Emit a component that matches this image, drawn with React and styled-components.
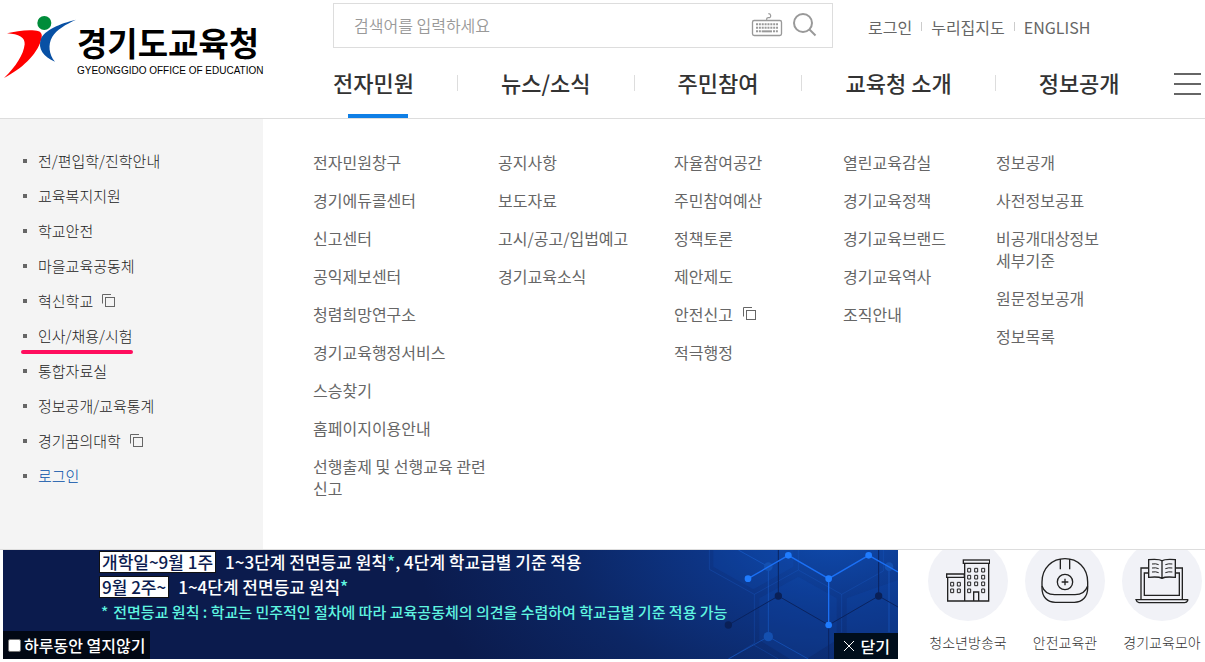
import React from "react";
import styled, { createGlobalStyle, css } from "styled-components";

const GlobalStyle = createGlobalStyle`
  * {
    box-sizing: border-box;
  }

  body {
    margin: 0;
    background: #fff;
    color: #666;
    font-family: "Noto Sans CJK KR", "Noto Sans", sans-serif;
    font-size: 16px;
    line-height: 22px;
    word-break: keep-all;
  }

  ul {
    list-style: none;
    margin: 0;
    padding: 0;
  }

  a {
    color: inherit;
    text-decoration: none;
  }

  button,
  input {
    font: inherit;
  }

  button {
    border: 0;
    padding: 0;
    background: none;
    cursor: pointer;
  }

  svg {
    display: block;
    flex-shrink: 0;
  }
`;

const Header = styled.header`
  display: flex;
  border-bottom: 1px solid #ddd;
`;

const Logo = styled.a`
  display: flex;
  flex: 0 0 333px;
  align-items: flex-start;
  padding: 15px 0 0 3px;
  color: #000;

  .logo-text {
    padding-top: 6px;
  }

  strong {
    display: block;
    font-size: 33px;
    font-weight: 700;
    line-height: 42px;
    white-space: nowrap;
  }

  small {
    display: block;
    font-family: "Liberation Sans", Arial, sans-serif;
    font-size: 10px;
    line-height: 16px;
    white-space: nowrap;
  }
`;

const HeaderBody = styled.div`
  flex: 1;
  min-width: 0;
  padding-top: 3px;
`;

const TopRow = styled.div`
  display: flex;
  align-items: center;
  column-gap: 35px;
`;

const SearchForm = styled.form`
  display: flex;
  align-items: center;
  flex: 0 1 500px;
  height: 45px;
  padding: 0 15px 1px 20px;
  border: 1px solid #ddd;

  input {
    flex: 1;
    min-width: 0;
    padding: 0;
    border: 0;
    outline: 0;
    color: #333;

    &::placeholder {
      color: #999;
      opacity: 1;
      font-weight: 350;
    }
  }

  button + button {
    margin-left: 10px;
  }
`;

const Utility = styled.ul`
  display: flex;
  align-items: center;
  padding-top: 2px;
  white-space: nowrap;

  li + li {
    display: flex;
    align-items: center;

    &::before {
      content: "";
      width: 1px;
      height: 9px;
      margin: 0 9px;
      background: #ccc;
    }
  }
`;

const NavRow = styled.nav`
  display: flex;
  align-items: center;
  justify-content: space-between;
  height: 68px;
  margin-top: 2px;
  padding-right: 4px;
`;

const MainMenu = styled.ul`
  display: flex;
  height: 100%;
  white-space: nowrap;
`;

const MainMenuItem = styled.li`
  position: relative;
  display: flex;
  align-items: center;
  color: #333;
  font-size: 22px;
  font-weight: 500;

  li + &::before {
    content: "";
    width: 1px;
    height: 16px;
    margin: 0 43px 2px;
    background: #ddd;
  }

  a {
    padding-bottom: 4px;
  }

  ${(props) =>
    props.$active &&
    css`
      &::after {
        content: "";
        position: absolute;
        bottom: 0;
        left: 15px;
        width: 60px;
        height: 4px;
        background: #0f7fe6;
      }
    `};
`;

const MenuButton = styled.button`
  display: flex;
  flex-direction: column;
  row-gap: 8px;
  width: 27px;

  span {
    height: 2px;
    background: #666;
  }
`;

const MegaMenu = styled.main`
  display: flex;
  border-bottom: 1px solid #ddd;
`;

const Sidebar = styled.aside`
  flex: 0 0 263px;
  padding: 25px 23px;
  background: #f4f4f4;
  color: #222;
  font-size: 15px;
  font-weight: 300;
`;

const SideItem = styled.li`
  position: relative;
  display: flex;
  align-items: center;
  width: fit-content;
  height: 35px;
  color: ${(props) => (props.$blue ? "#004ea8" : "inherit")};

  &::before {
    content: "";
    width: 4px;
    height: 4px;
    margin: 0 11px 1px 0;
    background: #666;
  }

  a {
    padding-bottom: 2px;
  }

  svg {
    margin: 0 0 2px 9px;
  }

  ${(props) =>
    props.$marked &&
    css`
      &::after {
        content: "";
        position: absolute;
        right: 0;
        bottom: 0;
        left: -2px;
        height: 4px;
        border-radius: 2px;
        background: #ff0d5e;
      }
    `};
`;

const Columns = styled.div`
  display: grid;
  flex: 1;
  grid-template-columns: 185fr 176fr 169fr 153fr 153fr;
  padding: 32px 56px 50px 50px;
`;

const Column = styled.ul`
  display: flex;
  flex-direction: column;
  row-gap: 16px;

  li {
    display: flex;
    align-items: center;
    column-gap: 10px;
  }
`;

const Bottom = styled.section`
  display: flex;
  padding: 0 3px;
`;

const Banner = styled.div`
  position: relative;
  display: flex;
  flex: 1;
  flex-direction: column;
  color: #fff;
  font-weight: 500;
  background: radial-gradient(
    ellipse 420px 260px at calc(100% - 65px) -20px,
    #0f4cb0 0%,
    #0d3688 30%,
    #0c2664 65%,
    #0b1b4d 100%
  );
`;

const Pattern = styled.svg`
  position: absolute;
  top: 0;
  right: 0;
`;

const Notice = styled.div`
  position: relative;
  display: flex;
  flex-direction: column;
  row-gap: 3px;
  padding: 1px 0 0 96px;
  font-size: 17px;
  line-height: 22px;
  white-space: nowrap;

  p {
    display: flex;
    column-gap: 9px;
    margin: 0;
  }

  em {
    color: #5ff5e0;
    font-style: normal;
  }

  mark {
    padding: 0 2px;
    border: 1px solid #111;
    background: #fff;
    color: #0c1c50;
    line-height: 20px;
  }

  .remark {
    column-gap: 5px;
    padding-left: 2px;
    color: #5ff5e0;
    font-size: 15px;
    line-height: 22px;
  }
`;

const BannerFooter = styled.div`
  position: relative;
  display: flex;
  align-items: flex-end;
  justify-content: space-between;
  margin-top: 8px;
`;

const HideToday = styled.label`
  display: flex;
  align-items: center;
  column-gap: 3px;
  height: 28px;
  padding: 0 5px;
  background: #020814;

  input {
    width: 13px;
    height: 13px;
    margin: 0;
    border: 1px solid #767676;
    border-radius: 2px;
    background: #fff;
    appearance: none;
  }
`;

const CloseButton = styled.button`
  display: flex;
  align-items: center;
  column-gap: 6px;
  height: 26px;
  padding: 0 8px 0 9px;
  background: #000e1c;
  color: #fff;
`;

const QuickLinks = styled.ul`
  display: flex;
  column-gap: 17px;
  overflow: hidden;
  padding-left: 30px;
`;

const QuickLink = styled.li`
  width: 80px;
  color: #333;
  font-size: 14px;
  font-weight: 300;
  text-align: center;
  white-space: nowrap;

  a {
    display: flex;
    flex-direction: column;
    align-items: center;
    row-gap: 10px;
  }

  .circle {
    display: flex;
    align-items: center;
    justify-content: center;
    width: 80px;
    height: 80px;
    margin-top: -9px;
    border-radius: 50%;
    background: #f1f2f7;
  }
`;

const mainMenu = ["전자민원", "뉴스/소식", "주민참여", "교육청 소개", "정보공개"];

const sideMenu = [
  { label: "전/편입학/진학안내" },
  { label: "교육복지지원" },
  { label: "학교안전" },
  { label: "마을교육공동체" },
  { label: "혁신학교", external: true },
  { label: "인사/채용/시험", marked: true },
  { label: "통합자료실" },
  { label: "정보공개/교육통계" },
  { label: "경기꿈의대학", external: true },
  { label: "로그인", blue: true },
];

const subMenus = [
  [
    "전자민원창구",
    "경기에듀콜센터",
    "신고센터",
    "공익제보센터",
    "청렴희망연구소",
    "경기교육행정서비스",
    "스승찾기",
    "홈페이지이용안내",
    "선행출제 및 선행교육 관련 신고",
  ],
  ["공지사항", "보도자료", "고시/공고/입법예고", "경기교육소식"],
  ["자율참여공간", "주민참여예산", "정책토론", "제안제도", "안전신고", "적극행정"],
  ["열린교육감실", "경기교육정책", "경기교육브랜드", "경기교육역사", "조직안내"],
  ["정보공개", "사전정보공표", "비공개대상정보 세부기준", "원문정보공개", "정보목록"],
];

const ExternalIcon = () => (
  <svg width="14" height="14" viewBox="0 0 14 14" fill="none" stroke="#666">
    <path d="M.5 9.5V.5H9" />
    <rect x="3.5" y="3.5" width="9" height="9" />
  </svg>
);

const Emblem = () => (
  <svg width="74" height="64" viewBox="9 45 222 192">
    <circle cx="133" cy="69" r="21" fill="#008c3a" />
    <path
      d="M21 100C50 92 96 87 116 94C127 98 127 109 123 121C110 165 65 207 12 234C48 200 71 163 74 133C76 113 57 102 21 100Z"
      fill="#f00"
    />
    <path
      d="M228 59C181 70 133 91 123 116C112 146 131 171 165 185C147 163 143 134 157 110C170 89 197 73 228 59Z"
      fill="#0850a4"
    />
  </svg>
);

const KeyboardIcon = () => (
  <svg width="32" height="26" viewBox="1290 33 96 78" fill="none" stroke="#999">
    <rect x="1294.500" y="58.500" width="87" height="45" rx="5" strokeWidth="4" />
    <path d="M1337 57V53Q1337 50 1342 50H1346Q1350 48 1349 43Q1348 38 1342 38" strokeWidth="3.500" />
    <path d="M1305 70H1371M1305 80H1371" strokeWidth="6" strokeDasharray="6 2.600" />
    <path d="M1305 91H1320M1356 91H1371" strokeWidth="6" strokeDasharray="6 2.600" />
    <path d="M1322 91H1353" strokeWidth="6" />
  </svg>
);

const SearchIcon = () => (
  <svg width="24" height="24" viewBox="0 0 24 24" fill="none" stroke="#999" strokeWidth="2">
    <circle cx="10" cy="10" r="9" />
    <path d="M16.500 16.500L22.500 22.500" />
  </svg>
);

const BuildingIcon = () => (
  <svg width="44" height="44" viewBox="153 59 132 132" fill="none" stroke="#222" strokeWidth="4">
    <rect x="205" y="62" width="79" height="10" />
    <path d="M209 72V185H281V72M155 104H208V114H155ZM158 114V185H209M236 185V158H251V185" />
    <path
      d="M218 87h9v11h-9zM239 87h9v11h-9zM260 87h9v11h-9zM218 108h9v11h-9zM239 108h9v11h-9zM260 108h9v11h-9zM218 128h9v11h-9zM239 128h9v11h-9zM260 128h9v11h-9zM218 149h9v11h-9zM260 149h9v11h-9zM167 129h9v11h-9zM187 129h9v11h-9zM167 149h9v11h-9zM187 149h9v11h-9z"
      strokeWidth="3"
    />
  </svg>
);

const HelmetIcon = () => (
  <svg width="48" height="46" viewBox="440 56 144 138" fill="none" stroke="#222" strokeWidth="4">
    <path d="M443 140V128C443 85 474 58 512 58S580 85 580 128V146C580 173 563 189 540 189H483C459 189 443 173 443 146Z" />
    <path d="M443 140C449 158 463 166 481 166H542C561 166 574 157 580 140M498 59V90M526 59V90" />
    <circle cx="512" cy="128" r="23" />
    <path d="M502 128H522M512 118V138" />
  </svg>
);

const LaptopIcon = () => (
  <svg width="54" height="46" viewBox="725 55 162 138" fill="none" stroke="#222" strokeWidth="4">
    <path d="M765 85H743V179M847 85H867V179M764 100H753V167H858V100H847" />
    <path d="M728 180H883V183Q880 189 874 189H737Q730 188 728 180Z" />
    <path d="M806 64Q798 57 766 60V113Q796 110 806 116Q816 110 846 113V60Q815 57 806 64ZM806 64V116" />
    <path d="M776 73Q788 71 796 75M776 85Q788 83 796 87M776 97Q788 95 796 99M816 75Q826 71 837 73M816 87Q826 83 837 85M816 99Q826 95 837 97" strokeWidth="3" />
  </svg>
);

const CloseIcon = () => (
  <svg width="12" height="12" viewBox="0 0 12 12" stroke="#fff">
    <path d="M1 1L11 11M11 1L1 11" />
  </svg>
);

const NetworkPattern = () => (
  <Pattern width="218" height="109" viewBox="720 30 654 327" fill="none" aria-hidden="true">
    <path
      d="M1075 110L1190 175V300L1100 357H1050L958 300V175ZM1374 120L1220 175V300L1320 357H1374ZM820 30V80L940 148L1060 80V30Z"
      fill="#1458c8"
      fillOpacity=".16"
    />
    <path
      d="M808 30V88L943 163V310L865 357M943 163L1075 90L1205 163V277M1075 90V30M1205 163L1330 93V30M943 316L1015 357"
      stroke="#1d62cf"
      strokeOpacity=".28"
      strokeWidth="3"
    />
    <path
      d="M895 30L985 80V290M985 290L865 357M985 290L1105 357M1347 80V277"
      stroke="#1b66da"
      strokeOpacity=".5"
      strokeWidth="3"
    />
    <g fill="#1450b0">
      <circle cx="985" cy="80" r="13" />
      <circle cx="1347" cy="80" r="13" />
      <circle cx="985" cy="290" r="14" />
    </g>
    <path
      d="M865 255L1015 168L1166 255L1316 168L1374 201M1015 168V30M1316 168V30M1166 255V357"
      stroke="#0a235f"
      strokeWidth="3"
    />
    <g fill="#0a2057">
      <circle cx="865" cy="255" r="11" />
      <circle cx="1015" cy="168" r="11" />
      <circle cx="1316" cy="168" r="11" />
    </g>
    <path d="M924 116L1045 46L1166 116L1286 46L1374 96M1166 116V255" stroke="#1b70f5" strokeWidth="4" />
    <g fill="#1f7cff">
      <circle cx="924" cy="116" r="10" />
      <circle cx="1045" cy="46" r="10" />
      <circle cx="1166" cy="116" r="10" />
      <circle cx="1286" cy="46" r="10" />
      <circle cx="1166" cy="255" r="10" />
    </g>
  </Pattern>
);

const quickLinks = [
  { label: "청소년방송국", Icon: BuildingIcon },
  { label: "안전교육관", Icon: HelmetIcon },
  { label: "경기교육모아", Icon: LaptopIcon },
];

const App = () => {
  return (
    <>
      <GlobalStyle />
      <Header>
        <Logo href="#">
          <Emblem />
          <span className="logo-text">
            <strong>경기도교육청</strong>
            <small>GYEONGGIDO OFFICE OF EDUCATION</small>
          </span>
        </Logo>

        <HeaderBody>
          <TopRow>
            <SearchForm>
              <input type="text" aria-label="검색어" placeholder="검색어를 입력하세요" />
              <button type="button" aria-label="가상 키보드">
                <KeyboardIcon />
              </button>
              <button type="button" aria-label="검색">
                <SearchIcon />
              </button>
            </SearchForm>
            <Utility>
              {["로그인", "누리집지도", "ENGLISH"].map((label) => (
                <li key={label}>
                  <a href="#">{label}</a>
                </li>
              ))}
            </Utility>
          </TopRow>

          <NavRow>
            <MainMenu>
              {mainMenu.map((label, index) => (
                <MainMenuItem key={label} $active={index === 0}>
                  <a href="#">{label}</a>
                </MainMenuItem>
              ))}
            </MainMenu>
            <MenuButton type="button" aria-label="전체메뉴">
              <span />
              <span />
              <span />
            </MenuButton>
          </NavRow>
        </HeaderBody>
      </Header>

      <MegaMenu>
        <Sidebar>
          <ul>
            {sideMenu.map((item) => (
              <SideItem key={item.label} $marked={item.marked} $blue={item.blue}>
                <a href="#">{item.label}</a>
                {item.external && <ExternalIcon />}
              </SideItem>
            ))}
          </ul>
        </Sidebar>
        <Columns>
          {subMenus.map((items) => (
            <Column key={items[0]}>
              {items.map((label) => (
                <li key={label}>
                  <a href="#">{label}</a>
                  {label === "안전신고" && <ExternalIcon />}
                </li>
              ))}
            </Column>
          ))}
        </Columns>
      </MegaMenu>

      <Bottom>
        <Banner>
          <NetworkPattern />
          <Notice>
            <p>
              <mark>개학일~9월 1주</mark>
              <span>
                1~3단계 전면등교 원칙<em>*</em>, 4단계 학교급별 기준 적용
              </span>
            </p>
            <p>
              <mark>9월 2주~</mark>
              <span>
                1~4단계 전면등교 원칙<em>*</em>
              </span>
            </p>
            <p className="remark">
              <span>*</span>
              <span>
                전면등교 원칙 : 학교는 민주적인 절차에 따라 교육공동체의 의견을 수렴하여 학교급별 기준 적용 가능
              </span>
            </p>
          </Notice>
          <BannerFooter>
            <HideToday>
              <input type="checkbox" />
              하루동안 열지않기
            </HideToday>
            <CloseButton type="button">
              <CloseIcon />
              닫기
            </CloseButton>
          </BannerFooter>
        </Banner>

        <QuickLinks>
          {quickLinks.map(({ label, Icon }) => (
            <QuickLink key={label}>
              <a href="#">
                <span className="circle">
                  <Icon />
                </span>
                {label}
              </a>
            </QuickLink>
          ))}
        </QuickLinks>
      </Bottom>
    </>
  );
};

export default App;
